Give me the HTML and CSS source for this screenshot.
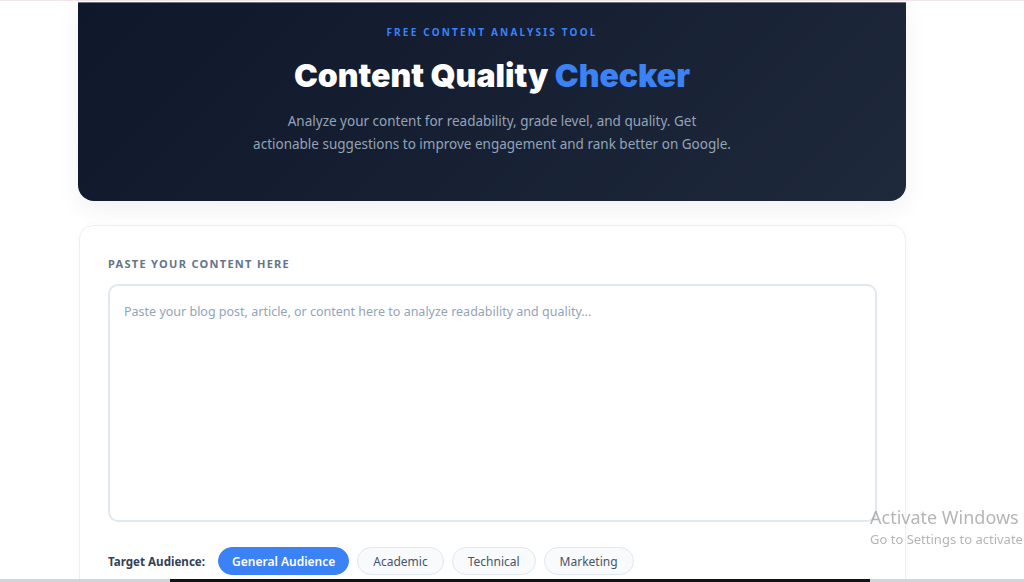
FILE: index.html
```html
<!DOCTYPE html>
<html lang="en">
<head>
    <meta charset="UTF-8">
    <meta name="viewport" content="width=device-width, initial-scale=1.0">
    <title>Content Quality Checker</title>
    <link rel="stylesheet" href="styles.css">
</head>
<body>
    <div class="page">
        <header class="hero">
            <div class="eyebrow">Free Content Analysis Tool</div>
            <h1>Content Quality <span class="accent">Checker</span></h1>
            <p class="lead">Analyze your content for readability, grade level, and quality. Get<br>actionable suggestions to improve engagement and rank better on Google.</p>
        </header>

        <section class="checker-card">
            <label class="field-label" for="content">Paste your content here</label>
            <textarea id="content" class="content-input" placeholder="Paste your blog post, article, or content here to analyze readability and quality..."></textarea>

            <div class="audience-row">
                <span class="audience-label">Target Audience:</span>
                <button class="pill active">General Audience</button>
                <button class="pill">Academic</button>
                <button class="pill">Technical</button>
                <button class="pill">Marketing</button>
            </div>
        </section>
    </div>

    <div class="watermark">
        <div class="wm-title">Activate Windows</div>
        <div class="wm-sub">Go to Settings to activate Windows.</div>
    </div>
    <div class="taskbar"></div>
</body>
</html>
```

FILE: styles.css
```css
body {
    margin: 0;
    font-family: 'Noto Sans', 'Open Sans', sans-serif;
    color: #1e293b;
    background: #fff;
    border-top: 1px solid #f3e4e8;
    overflow: hidden;
}
.page {
    width: 828px;
    margin: 0 0 0 78px;
    padding-top: 1px;
}
.hero {
    background: linear-gradient(135deg, #0f172a 0%, #1e293b 100%);
    border-top: 1px solid #6b7280;
    border-radius: 0 0 16px 16px;
    padding: 22px 40px 45px;
    text-align: center;
    box-shadow: 0 8px 24px rgba(15, 23, 42, 0.06);
}
.eyebrow {
    font-size: 10px;
    font-weight: 700;
    letter-spacing: 2.2px;
    text-transform: uppercase;
    color: #3b82f6;
    line-height: 14px;
}
.hero h1 {
    margin: 17px 0 14px;
    font-family: 'Inter', sans-serif;
    font-weight: 900;
    font-size: 32px;
    line-height: 40px;
    color: #fff;
}
.accent {
    color: #3b82f6;
}
.lead {
    margin: 0 auto;
    max-width: 520px;
    font-size: 13.5px;
    line-height: 23px;
    color: #94a3b8;
}
.checker-card {
    margin-top: 24px;
    margin-left: 1px;
    border: 1px solid #eceef2;
    border-radius: 14px;
    padding: 30px 28px 40px;
    box-shadow: 0 2px 10px rgba(15, 23, 42, 0.03);
}
.field-label {
    display: block;
    font-size: 11px;
    font-weight: 700;
    letter-spacing: 1.3px;
    text-transform: uppercase;
    color: #64748b;
    margin-bottom: 13px;
}
.content-input {
    display: block;
    box-sizing: border-box;
    width: 769px;
    height: 238px;
    border: 2px solid #e2e8f0;
    border-radius: 10px;
    padding: 17px 14px 16px;
    font-family: inherit;
    font-size: 12.5px;
    color: #334155;
    resize: none;
    outline: none;
}
.content-input::placeholder {
    color: #94a3b8;
}
.audience-row {
    display: flex;
    align-items: center;
    gap: 8px;
    margin-top: 25px;
}
.audience-label {
    font-size: 11.6px;
    font-weight: 700;
    color: #334155;
    margin-right: 5px;
}
.pill {
    height: 28px;
    padding: 0 15px;
    border-radius: 999px;
    border: 1px solid #e2e8f0;
    background: #f8fafc;
    color: #475569;
    font-family: inherit;
    font-size: 12px;
    cursor: pointer;
}
.pill.active {
    padding: 0 13px;
    background: #3b82f6;
    border-color: #3b82f6;
    color: #fff;
    font-weight: 600;
}
.watermark {
    position: fixed;
    left: 870px;
    top: 506px;
    white-space: nowrap;
    color: rgba(120, 120, 120, 0.55);
    font-family: 'Noto Sans', sans-serif;
}
.wm-title {
    font-size: 18px;
    line-height: 23px;
}
.wm-sub {
    font-size: 13px;
    line-height: 20px;
}
.taskbar {
    position: fixed;
    left: 0;
    right: 0;
    bottom: 0;
    height: 3px;
    background: linear-gradient(90deg, #d1d5db 0 170px, #111 170px 870px, #d1d5db 870px);
}
```
